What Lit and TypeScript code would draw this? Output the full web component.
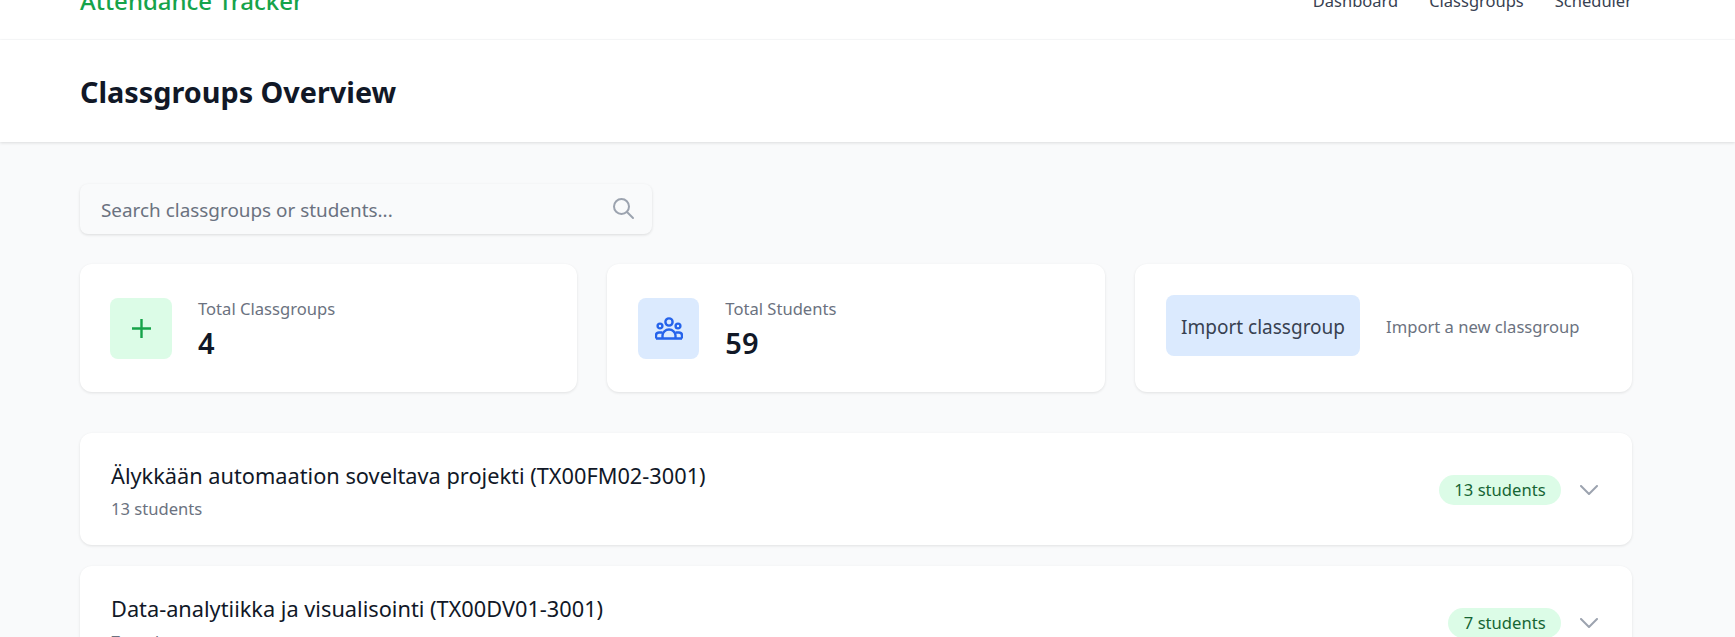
import { LitElement, html, css, svg } from "lit";
import { customElement } from "lit/decorators.js";

const groups = [
  { name: "Älykkään automaation soveltava projekti (TX00FM02-3001)", count: 13 },
  { name: "Data-analytiikka ja visualisointi (TX00DV01-3001)", count: 7 },
];

const chevron = svg`<path d="M1 1l8 8 8-8" fill="none" stroke="#9ca3af" stroke-width="2" stroke-linecap="round" stroke-linejoin="round" />`;

@customElement("app-root")
export class AppRoot extends LitElement {
  static styles = css`
    :host {
      display: block;
      height: 637px;
      overflow: hidden;
      background: #f9fafb;
      font-family: "Noto Sans", "Open Sans", sans-serif;
      color: #111827;
    }

    .nav {
      margin-top: -38px;
      height: 78px;
      box-sizing: border-box;
      padding: 0 103px 0 80px;
      background: #fff;
      border-bottom: 1px solid #f9fafb;
      display: flex;
      justify-content: space-between;
      align-items: center;
    }

    .logo {
      font-size: 24px;
      font-weight: 500;
      color: #16a34a;
    }

    .links {
      display: flex;
      gap: 31px;
      font-size: 16.5px;
      color: #374151;
    }

    .header {
      height: 102px;
      box-sizing: border-box;
      padding: 2px 103px 0 80px;
      background: #fff;
      box-shadow: 0 1px 3px rgba(0, 0, 0, 0.12);
      display: flex;
      align-items: center;
    }

    h1 {
      margin: 0;
      font-size: 28.8px;
      font-weight: 700;
      line-height: 36px;
    }

    main {
      padding: 42px 103px 0 80px;
    }

    .search {
      width: 572px;
      height: 50px;
      box-sizing: border-box;
      padding: 2px 17px 0 21px;
      margin-bottom: 30px;
      background: #f9fafb;
      border-radius: 8px;
      box-shadow: 0 1px 3px rgba(0, 0, 0, 0.12);
      display: flex;
      align-items: center;
      justify-content: space-between;
      font-size: 18.9px;
      color: #6b7280;
    }

    .search svg {
      margin-bottom: 5px;
    }

    .stats {
      display: grid;
      grid-template-columns: repeat(3, 1fr);
      gap: 30px;
      margin-bottom: 41px;
    }

    .card {
      background: #fff;
      border-radius: 12px;
      box-shadow: 0 1px 3px rgba(0, 0, 0, 0.1);
    }

    .stat {
      height: 128px;
      box-sizing: border-box;
      padding: 0 30.4px;
      display: flex;
      align-items: center;
      gap: 26px;
    }

    .tile {
      width: 61.6px;
      height: 61px;
      margin-top: 1px;
      border-radius: 8px;
      display: flex;
      align-items: center;
      justify-content: center;
      flex: none;
    }

    .tile.green {
      background: #dcfce7;
    }

    .tile.blue {
      background: #dbeafe;
    }

    .stat-text {
      padding-top: 2px;
    }

    .label {
      font-size: 16.6px;
      line-height: 24px;
      color: #6b7280;
    }

    .import-note {
      margin-bottom: 2px;
    }

    .value {
      margin-top: 4px;
      font-size: 29px;
      line-height: 36px;
      font-weight: 600;
    }

    .import-btn {
      width: 194px;
      height: 61px;
      box-sizing: border-box;
      padding-top: 3px;
      margin: 0 0 5px 1px;
      border-radius: 8px;
      background: #dbeafe;
      color: #374151;
      font-size: 19px;
      display: flex;
      align-items: center;
      justify-content: center;
      flex: none;
    }

    .group {
      height: 112px;
      box-sizing: border-box;
      padding: 3px 34px 0 31px;
      margin-bottom: 21px;
      display: flex;
      align-items: center;
      justify-content: space-between;
    }

    .group-name {
      font-size: 21.75px;
      line-height: 32px;
    }

    .group-sub {
      margin-top: 5px;
      font-size: 16.6px;
      line-height: 24px;
      color: #6b7280;
    }

    .right {
      display: flex;
      align-items: center;
      gap: 19px;
      margin-bottom: 2px;
    }

    .pill {
      height: 30px;
      padding: 0 15.4px;
      border-radius: 15px;
      background: #dcfce7;
      color: #166534;
      font-size: 16.6px;
      line-height: 30px;
    }
  `;

  render() {
    return html`
      <nav class="nav">
        <div class="logo">Attendance Tracker</div>
        <div class="links"><span>Dashboard</span><span>Classgroups</span><span>Scheduler</span></div>
      </nav>
      <header class="header"><h1>Classgroups Overview</h1></header>
      <main>
        <div class="search">
          <span>Search classgroups or students...</span>
          <svg width="24" height="24" viewBox="0 0 24 24" fill="none" stroke="#9ca3af" stroke-width="2" stroke-linecap="round">
            <circle cx="10.5" cy="10.5" r="7.5" />
            <path d="M16 16l6 6" />
          </svg>
        </div>
        <section class="stats">
          <div class="card stat">
            <div class="tile green">
              <svg width="19" height="19" viewBox="0 0 19 19" fill="none" stroke="#16a34a" stroke-width="2.4">
                <path d="M9.5 0v19M0 9.5h19" />
              </svg>
            </div>
            <div class="stat-text">
              <div class="label">Total Classgroups</div>
              <div class="value">4</div>
            </div>
          </div>
          <div class="card stat">
            <div class="tile blue">
              <svg width="28" height="23" viewBox="0 0 28 23" fill="none" stroke="#2563eb" stroke-width="2.4" stroke-linejoin="round">
                <circle cx="14" cy="5" r="3.6" />
                <circle cx="5" cy="9" r="2.4" />
                <circle cx="23" cy="9" r="2.4" />
                <path d="M7.5 21.5v-3a6.5 6 0 0 1 13 0v3" />
                <path d="M1 21.5v-3q0-3 3-3h3.5M27 21.5v-3q0-3-3-3h-3.5M1 21.5h26" />
              </svg>
            </div>
            <div class="stat-text">
              <div class="label">Total Students</div>
              <div class="value">59</div>
            </div>
          </div>
          <div class="card stat">
            <div class="import-btn">Import classgroup</div>
            <div class="label import-note">Import a new classgroup</div>
          </div>
        </section>
        ${groups.map(
          (g) => html`
            <div class="card group">
              <div>
                <div class="group-name">${g.name}</div>
                <div class="group-sub">${g.count} students</div>
              </div>
              <div class="right">
                <span class="pill">${g.count} students</span>
                <svg width="18" height="10" viewBox="0 0 18 10">${chevron}</svg>
              </div>
            </div>
          `
        )}
      </main>
    `;
  }
}
